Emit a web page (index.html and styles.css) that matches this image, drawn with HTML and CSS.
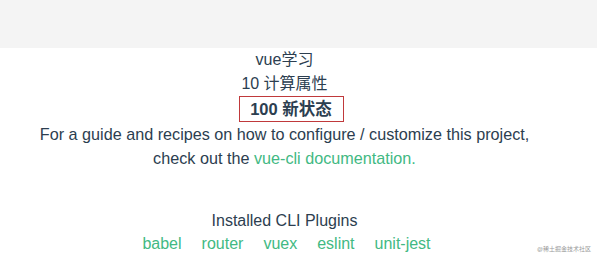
FILE: index.html
```html
<!DOCTYPE html>
<html lang="zh">
<head>
<meta charset="utf-8">
<link rel="stylesheet" href="styles.css">
</head>
<body>
<div class="topbar"></div>
<div class="app">
  <div class="line">vue学习</div>
  <div class="line">10 计算属性</div>
  <div class="line"><span class="boxed">100 新状态</span></div>
  <p class="intro">For a guide and recipes on how to configure / customize this project,<br>check out the <a href="#">vue-cli documentation.</a></p>
  <h3 class="plugins-title">Installed CLI Plugins</h3>
  <ul class="plugins">
    <li><a href="#">babel</a></li>
    <li><a href="#">router</a></li>
    <li><a href="#">vuex</a></li>
    <li><a href="#">eslint</a></li>
    <li><a href="#">unit-jest</a></li>
  </ul>
</div>
<div class="watermark">@稀土掘金技术社区</div>
</body>
</html>
```
FILE: styles.css
```css
html, body {
  margin: 0;
  padding: 0;
  background: #fff;
}
body {
  font-family: "Liberation Sans", Arial, "Noto Sans CJK SC", sans-serif;
  color: #2c3e50;
  font-size: 16px;
  overflow: hidden;
  height: 259px;
  position: relative;
}
.topbar {
  height: 48px;
  background: #f4f4f4;
}
.app {
  text-align: center;
  padding-right: 28px;
}
.line {
  line-height: 24px;
}
.boxed {
  display: inline-block;
  font-weight: bold;
  border: 1px solid #c0393b;
  padding: 0 11px 0 10px;
  margin-left: 14px;
  line-height: 24px;
  font-size: 16.5px;
}
.intro {
  margin: 0;
  line-height: 24px;
  font-size: 16.2px;
}
a {
  color: #42b983;
  text-decoration: none;
}
.plugins-title {
  margin: 39px 0 0;
  font-size: 16px;
  font-weight: normal;
  line-height: 24px;
}
.plugins {
  list-style: none;
  margin: 0;
  padding: 0 0 0 4px;
  display: flex;
  justify-content: center;
  gap: 20px;
  line-height: 22px;
}
.watermark {
  position: absolute;
  right: 6px;
  bottom: 6px;
  font-size: 6px;
  color: #9a9a9a;
}
```
